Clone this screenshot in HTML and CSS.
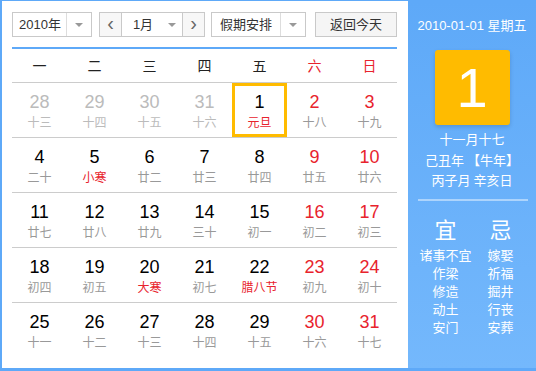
FILE: index.html
```html
<!DOCTYPE html>
<html lang="zh-CN">
<head>
    <meta charset="UTF-8">
    <meta name="viewport" content="width=device-width, initial-scale=1.0">
    <title>万年历</title>
    <link rel="stylesheet" href="styles.css">
</head>
<body>
    <div class="calendar">
        <div class="main">
            <div class="toolbar">
                <div class="select year">
                    <span class="value">2010年</span>
                    <span class="arrow"></span>
                </div>
                <div class="month-group">
                    <span class="nav">&lsaquo;</span>
                    <div class="select month">
                        <span class="value">1月</span>
                        <span class="arrow"></span>
                    </div>
                    <span class="nav">&rsaquo;</span>
                </div>
                <div class="select holiday">
                    <span class="value">假期安排</span>
                    <span class="arrow"></span>
                </div>
                <div class="today-btn">返回今天</div>
            </div>

            <div class="week">
                <span>一</span><span>二</span><span>三</span><span>四</span><span>五</span>
                <span class="red">六</span><span class="red">日</span>
            </div>

            <div class="days">
                <div class="row">
                    <div class="day other"><b>28</b><i>十三</i></div>
                    <div class="day other"><b>29</b><i>十四</i></div>
                    <div class="day other"><b>30</b><i>十五</i></div>
                    <div class="day other"><b>31</b><i>十六</i></div>
                    <div class="day today"><b>1</b><i class="fest">元旦</i></div>
                    <div class="day weekend"><b>2</b><i>十八</i></div>
                    <div class="day weekend"><b>3</b><i>十九</i></div>
                </div>
                <div class="row">
                    <div class="day"><b>4</b><i>二十</i></div>
                    <div class="day"><b>5</b><i class="fest">小寒</i></div>
                    <div class="day"><b>6</b><i>廿二</i></div>
                    <div class="day"><b>7</b><i>廿三</i></div>
                    <div class="day"><b>8</b><i>廿四</i></div>
                    <div class="day weekend"><b>9</b><i>廿五</i></div>
                    <div class="day weekend"><b>10</b><i>廿六</i></div>
                </div>
                <div class="row">
                    <div class="day"><b>11</b><i>廿七</i></div>
                    <div class="day"><b>12</b><i>廿八</i></div>
                    <div class="day"><b>13</b><i>廿九</i></div>
                    <div class="day"><b>14</b><i>三十</i></div>
                    <div class="day"><b>15</b><i>初一</i></div>
                    <div class="day weekend"><b>16</b><i>初二</i></div>
                    <div class="day weekend"><b>17</b><i>初三</i></div>
                </div>
                <div class="row">
                    <div class="day"><b>18</b><i>初四</i></div>
                    <div class="day"><b>19</b><i>初五</i></div>
                    <div class="day"><b>20</b><i class="fest">大寒</i></div>
                    <div class="day"><b>21</b><i>初七</i></div>
                    <div class="day"><b>22</b><i class="fest">腊八节</i></div>
                    <div class="day weekend"><b>23</b><i>初九</i></div>
                    <div class="day weekend"><b>24</b><i>初十</i></div>
                </div>
                <div class="row last">
                    <div class="day"><b>25</b><i>十一</i></div>
                    <div class="day"><b>26</b><i>十二</i></div>
                    <div class="day"><b>27</b><i>十三</i></div>
                    <div class="day"><b>28</b><i>十四</i></div>
                    <div class="day"><b>29</b><i>十五</i></div>
                    <div class="day weekend"><b>30</b><i>十六</i></div>
                    <div class="day weekend"><b>31</b><i>十七</i></div>
                </div>
            </div>
        </div>

        <div class="side">
            <div class="side-date">2010-01-01 星期五</div>
            <div class="big-day">1</div>
            <div class="lunar">
                <div>十一月十七</div>
                <div>己丑年 【牛年】</div>
                <div>丙子月 辛亥日</div>
            </div>
            <div class="divider"></div>
            <div class="almanac">
                <div class="col">
                    <div class="head">宜</div>
                    <div>诸事不宜</div>
                    <div>作梁</div>
                    <div>修造</div>
                    <div>动土</div>
                    <div>安门</div>
                </div>
                <div class="col">
                    <div class="head">忌</div>
                    <div>嫁娶</div>
                    <div>祈福</div>
                    <div>掘井</div>
                    <div>行丧</div>
                    <div>安葬</div>
                </div>
            </div>
        </div>
    </div>
</body>
</html>
```

FILE: styles.css
```css
body {
    margin: 0;
    font-family: 'Liberation Sans', 'Noto Sans CJK SC', sans-serif;
    background: #fff;
}
.calendar {
    width: 536px;
    height: 371px;
    box-sizing: border-box;
    border: solid #5ea9f8;
    border-width: 1px 0 3px 2px;
    display: flex;
}
.main {
    width: 406px;
    box-sizing: border-box;
    padding: 11px 11px 0 10px;
    background: #fff;
}
.toolbar {
    display: flex;
    height: 25px;
    padding-bottom: 10px;
    border-bottom: 2px solid #5ea9f8;
}
.select {
    display: flex;
    box-sizing: border-box;
    height: 25px;
    border: 1px solid #c9c9c9;
    font-size: 13px;
    color: #333;
}
.select .value {
    flex: 1;
    line-height: 23px;
    text-align: center;
}
.select .arrow {
    width: 24px;
    border-left: 1px solid #ddd;
    position: relative;
}
.select .arrow::after {
    content: '';
    position: absolute;
    left: 8px;
    top: 10px;
    border: 4px solid transparent;
    border-top: 4px solid #999;
    border-bottom: 0;
}
.year {
    width: 80px;
}
.year .value {
    padding-left: 1px;
}
.month-group {
    display: flex;
    margin-left: 7px;
    height: 25px;
}
.nav {
    width: 23px;
    box-sizing: border-box;
    height: 25px;
    border: 1px solid #c9c9c9;
    background: #f7f7f7;
    text-align: center;
    font-size: 20px;
    line-height: 20px;
    color: #666;
}
.month {
    width: 60px;
    border-left: 0;
    border-right: 0;
}
.month .arrow {
    width: 22px;
    border-left: 0;
}
.month .value {
    padding-left: 4px;
}
.holiday {
    width: 95px;
    margin-left: 6px;
}
.today-btn {
    width: 82px;
    box-sizing: border-box;
    height: 25px;
    margin-left: 9px;
    border: 1px solid #c9c9c9;
    background: #f5f5f5;
    font-size: 13px;
    line-height: 23px;
    text-align: center;
    color: #333;
}
.week {
    display: grid;
    grid-template-columns: repeat(7, 55px);
    height: 33px;
    border-bottom: 1px solid #ccc;
    font-family: 'Noto Sans CJK SC', sans-serif;
    font-size: 14px;
    line-height: 33px;
    text-align: center;
    color: #222;
}
.red {
    color: #e8232d;
}
.row {
    display: grid;
    grid-template-columns: repeat(7, 55px);
    height: 54px;
    border-bottom: 1px solid #ccc;
}
.row.last {
    border-bottom: 0;
}
.day {
    display: flex;
    flex-direction: column;
    align-items: center;
    padding-top: 9px;
    box-sizing: border-box;
}
.day b {
    font-weight: normal;
    font-size: 18px;
    line-height: 20px;
    color: #000;
}
.day i {
    font-style: normal;
    font-family: 'Noto Sans CJK SC', sans-serif;
    font-size: 12px;
    line-height: 16px;
    margin-top: 2px;
    color: #999;
}
.day i.fest {
    color: #e8232d;
}
.day.weekend b {
    color: #e8232d;
}
.day.other b {
    color: #bbb;
}
.day.other i {
    color: #bbb;
}
.day.today {
    box-shadow: inset 0 0 0 3px #ffbb00;
}
.side {
    flex: 1;
    background: linear-gradient(#5ea9f8, #74b8fc);
    color: #fff;
    padding-top: 15px;
    text-align: center;
}
.side-date {
    font-size: 13px;
    line-height: 20px;
}
.big-day {
    width: 75px;
    height: 75px;
    margin: 14px auto 0;
    background: #ffbb00;
    border-radius: 3px;
    box-shadow: 0 2px 4px rgba(0, 0, 0, 0.15);
    font-size: 56px;
    font-weight: 300;
    line-height: 75px;
}
.lunar {
    margin-top: 4px;
    font-family: 'Noto Sans CJK SC', sans-serif;
    font-size: 13px;
    line-height: 20.5px;
}
.divider {
    height: 2px;
    margin: 8px 8px 0 10px;
    background: rgba(255, 255, 255, 0.45);
}
.almanac {
    display: grid;
    grid-template-columns: 55px 55px;
    margin: 13px 0 0 10px;
    font-family: 'Noto Sans CJK SC', sans-serif;
    font-size: 13px;
    line-height: 18px;
}
.almanac .head {
    font-size: 22px;
    line-height: 28px;
    margin-bottom: 4px;
}
```
